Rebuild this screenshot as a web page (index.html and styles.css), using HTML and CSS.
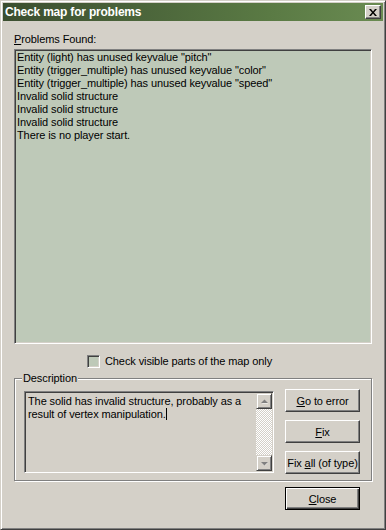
FILE: index.html
```html
<!DOCTYPE html>
<html lang="en">
<head>
  <meta charset="UTF-8">
  <title>Check map for problems</title>
  <link rel="stylesheet" href="styles.css">
</head>
<body>
  <!-- Dialog window -->
  <div class="window">
    <div class="titlebar">
      <span class="title">Check map for problems</span>
      <button class="title-close" aria-label="Close">
        <svg width="8" height="7" viewBox="0 0 8 7">
          <path d="M0 0h2l2 2.5L6 0h2L5 3.5 8 7H6L4 4.5 2 7H0l3-3.5z" fill="#000"/>
        </svg>
      </button>
    </div>

    <div class="dialog">
      <div class="label"><u>P</u>roblems Found:</div>

      <!-- Problem list -->
      <div class="listbox">
        <div class="list-item">Entity (light) has unused keyvalue "pitch"</div>
        <div class="list-item">Entity (trigger_multiple) has unused keyvalue "color"</div>
        <div class="list-item">Entity (trigger_multiple) has unused keyvalue "speed"</div>
        <div class="list-item">Invalid solid structure</div>
        <div class="list-item">Invalid solid structure</div>
        <div class="list-item">Invalid solid structure</div>
        <div class="list-item">There is no player start.</div>
      </div>

      <label class="check-row">
        <span class="checkbox"></span>
        <span>Check visible parts of the map only</span>
      </label>

      <!-- Description group -->
      <fieldset class="group">
        <legend>Description</legend>
        <div class="group-body">
          <div class="textbox">
            <div class="textbox-text">The solid has invalid structure, probably as a result of vertex manipulation.<span class="caret"></span></div>
            <div class="scrollbar">
              <div class="scroll-btn">
                <svg width="7" height="5" viewBox="0 0 7 5"><path d="M4 1.5l3 3H1z" fill="#fff"/><path d="M3.5 0.5L7 4H0z" fill="#808080"/></svg>
              </div>
              <div class="scroll-track"></div>
              <div class="scroll-btn">
                <svg width="7" height="5" viewBox="0 0 7 5"><path d="M1 1.5h6l-3 3z" fill="#fff"/><path d="M0 1h7L3.5 4.5z" fill="#808080"/></svg>
              </div>
            </div>
          </div>
          <div class="button-col">
            <button class="btn"><u>G</u>o to error</button>
            <button class="btn"><u>F</u>ix</button>
            <button class="btn">Fix <u>a</u>ll (of type)</button>
          </div>
        </div>
      </fieldset>

      <div class="footer">
        <button class="btn btn-default"><u>C</u>lose</button>
      </div>
    </div>
  </div>
</body>
</html>
```

FILE: styles.css
```css
:root {
  --face: #d4d0c8;
  --shadow: #808080;
  --dark: #404040;
  --light: #ffffff;
  --list-bg: #bec9b8;
}

body {
  margin: 0;
  background: var(--face);
  font-family: 'Liberation Sans', Arial, sans-serif;
  font-size: 11px;
  line-height: 13px;
  letter-spacing: -0.1px;
  color: #000;
}

.window {
  width: 386px;
  height: 530px;
  box-sizing: border-box;
  padding: 2px;
  background: var(--face);
  border: 1px solid;
  border-color: var(--face) var(--dark) var(--dark) var(--face);
  box-shadow: inset 1px 1px var(--light), inset -1px -1px var(--shadow);
}

.titlebar {
  height: 18px;
  display: flex;
  align-items: center;
  justify-content: space-between;
  padding: 0 2px 0 2px;
  background: linear-gradient(to right, #3b4e30, #5a7a44 70%, #6a8b52);
}

.title {
  color: #fff;
  font-weight: bold;
  font-size: 12px;
  letter-spacing: -0.2px;
}

.title-close {
  width: 16px;
  height: 14px;
  padding: 0;
  margin: 0;
  display: flex;
  align-items: center;
  justify-content: center;
  background: var(--face);
  border: 1px solid;
  border-color: var(--light) var(--dark) var(--dark) var(--light);
  box-shadow: inset -1px -1px var(--shadow);
}

.dialog {
  padding: 0 11px;
}

.label {
  margin-top: 12px;
}

.listbox {
  margin-top: 3px;
  height: 295px;
  box-sizing: border-box;
  padding: 0 2px;
  background: var(--list-bg);
  border: 1px solid;
  border-color: var(--shadow) var(--light) var(--light) var(--shadow);
  box-shadow: inset 1px 1px var(--dark), inset -1px -1px var(--face);
}

.list-item {
  height: 13px;
  white-space: nowrap;
}

.list-item:first-child {
  margin-top: 1px;
}

.check-row {
  display: flex;
  align-items: center;
  gap: 5px;
  margin-top: 11px;
  padding-left: 73px;
  height: 13px;
}

.checkbox {
  width: 13px;
  height: 13px;
  box-sizing: border-box;
  background: var(--list-bg);
  border: 1px solid;
  border-color: var(--shadow) var(--light) var(--light) var(--shadow);
  box-shadow: inset 1px 1px var(--dark), inset -1px -1px var(--face);
}

.group {
  margin: 4px 0 0 0;
  padding: 4px 11px 6px 9px;
  min-width: 0;
  border: 1px solid var(--shadow);
  box-shadow: inset 1px 1px var(--light), 1px 1px var(--light);
}

.group legend {
  padding: 0 1px;
  margin-left: -2px;
  background: var(--face);
}

.group-body {
  display: flex;
  gap: 11px;
}

.textbox {
  margin-top: 2px;
  width: 250px;
  height: 82px;
  box-sizing: border-box;
  display: flex;
  border: 1px solid;
  border-color: var(--shadow) var(--light) var(--light) var(--shadow);
  box-shadow: inset 1px 1px var(--dark), inset -1px -1px var(--face);
  padding: 1px;
}

.textbox-text {
  flex: 1;
  padding: 2px 2px 0 2px;
}

.caret {
  display: inline-block;
  width: 1px;
  height: 12px;
  background: #000;
  vertical-align: -2px;
}

.scrollbar {
  width: 16px;
  display: flex;
  flex-direction: column;
}

.scroll-btn {
  height: 16px;
  box-sizing: border-box;
  display: flex;
  align-items: center;
  justify-content: center;
  background: var(--face);
  border: 1px solid;
  border-color: var(--face) var(--dark) var(--dark) var(--face);
  box-shadow: inset 1px 1px var(--light), inset -1px -1px var(--shadow);
}

.scroll-track {
  flex: 1;
  background: repeating-conic-gradient(var(--light) 0 25%, var(--face) 0 50%) 0 0 / 2px 2px;
}

.button-col {
  display: flex;
  flex-direction: column;
  gap: 8px;
}

.btn {
  width: 75px;
  height: 23px;
  padding: 0;
  font-family: inherit;
  font-size: 11px;
  letter-spacing: inherit;
  color: #000;
  background: var(--face);
  border: 1px solid;
  border-color: var(--light) var(--dark) var(--dark) var(--light);
  box-shadow: inset -1px -1px var(--shadow);
}

.footer {
  display: flex;
  justify-content: flex-end;
  margin-top: 6px;
  padding-right: 12px;
}

.btn-default {
  border: 1px solid #000;
  box-shadow: inset 1px 1px var(--light), inset -1px -1px var(--dark), inset -2px -2px var(--shadow);
}
```
